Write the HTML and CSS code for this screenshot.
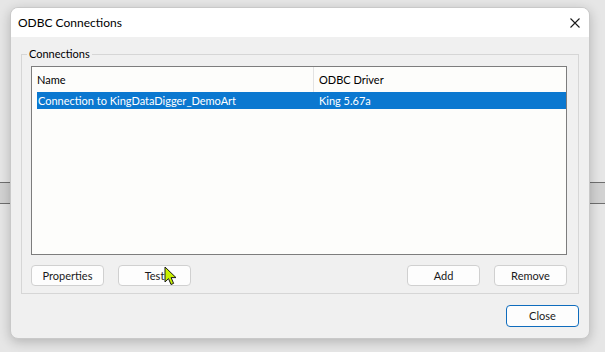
FILE: index.html
```html
<!DOCTYPE html>
<html>
<head>
<meta charset="utf-8">
<link rel="stylesheet" href="styles.css">
</head>
<body>
<div class="window">
  <div class="titlebar">
    <span class="title">ODBC Connections</span>
    <svg class="close-x" width="10" height="10" viewBox="0 0 10 10"><path d="M0.5 0.5 L9.5 9.5 M9.5 0.5 L0.5 9.5" stroke="#1b1b1b" stroke-width="1.1" fill="none"/></svg>
  </div>
  <div class="content">
    <div class="group">
      <span class="group-label">Connections</span>
      <div class="list">
        <div class="list-header">
          <div class="col col-name">Name</div>
          <div class="col col-driver">ODBC Driver</div>
        </div>
        <div class="row selected">
          <div class="cell cell-name">Connection to KingDataDigger_DemoArt</div>
          <div class="cell cell-driver">King 5.67a</div>
        </div>
      </div>
      <div class="buttons">
        <button class="btn">Properties</button>
        <button class="btn">Test</button>
        <span class="spacer"></span>
        <button class="btn">Add</button>
        <button class="btn">Remove</button>
      </div>
    </div>
    <div class="footer">
      <button class="btn btn-default">Close</button>
    </div>
  </div>
</div>
<svg class="cursor" width="14" height="20" viewBox="0 0 14 20"><path d="M1 1 L1 16 L4.5 12.6 L7 18.5 L9.6 17.4 L7.1 11.6 L12 11.6 Z" fill="#c8f000" stroke="#1a1a1a" stroke-width="1" stroke-linejoin="round"/></svg>
</body>
</html>
```
FILE: styles.css
```css
html, body {
  margin: 0;
  padding: 0;
}
body {
  width: 605px;
  height: 352px;
  overflow: hidden;
  position: relative;
  font-family: "Lato", "Noto Sans", sans-serif;
  font-size: 11px;
  color: #1a1a1a;
  background:
    linear-gradient(to bottom, transparent 182px, #6f6f6f 182px, #6f6f6f 183px, #d2d2d2 183px, #d2d2d2 203px, #6f6f6f 203px, #6f6f6f 204px, transparent 204px),
    #e6e6e6;
  padding-top: 7px;
  padding-left: 10px;
  box-sizing: border-box;
}
.window {
  width: 580px;
  height: 332px;
  box-sizing: border-box;
  border: 1px solid #c9c9c9;
  border-radius: 8px;
  background: #f0f0f0;
  box-shadow: 0 3px 12px rgba(0, 0, 0, 0.22);
  overflow: hidden;
  display: flex;
  flex-direction: column;
}
.titlebar {
  height: 29px;
  background: #ffffff;
  display: flex;
  align-items: center;
  justify-content: space-between;
  padding: 0 9px 0 7px;
  flex: none;
}
.title {
  font-size: 12px;
  color: #000;
}
.close-x {
  display: block;
  margin-top: 1px;
}
.content {
  flex: 1;
  display: flex;
  flex-direction: column;
  padding: 17px 10px 0 10px;
}
.group {
  position: relative;
  border: 1px solid #d6d6d6;
  height: 240px;
  box-sizing: border-box;
  padding: 11px 11px 0 9px;
  display: flex;
  flex-direction: column;
}
.group-label {
  position: absolute;
  left: 5px;
  top: -9px;
  padding: 0 2px;
  background: #f0f0f0;
  line-height: 16px;
  color: #000;
}
.list {
  height: 189px;
  box-sizing: border-box;
  border: 1px solid #7d7d7d;
  background: #fdfdfb;
  display: flex;
  flex-direction: column;
}
.list-header {
  display: flex;
  height: 25px;
  align-items: stretch;
}
.col {
  display: flex;
  align-items: center;
  color: #000;
}
.col-name {
  width: 276px;
  padding-left: 5px;
  border-right: 1px solid #e3e3e3;
}
.col-driver {
  flex: 1;
  padding-left: 5px;
}
.row {
  display: flex;
  height: 17px;
  align-items: center;
  margin-left: 5px;
}
.row.selected {
  background: #0b78d0;
  color: #fff;
}
.cell-name {
  width: 276px;
  padding-left: 1px;
}
.cell-driver {
  flex: 1;
  padding-left: 5px;
}
.buttons {
  display: flex;
  gap: 14px;
  margin-top: 10px;
}
.spacer {
  flex: 1;
}
.btn {
  width: 73px;
  height: 21px;
  box-sizing: border-box;
  border: 1px solid #d0d0d0;
  border-radius: 4px;
  background: #fdfdfd;
  font-family: inherit;
  font-size: 11px;
  color: #1a1a1a;
  padding: 0;
  line-height: 18px;
}
.footer {
  display: flex;
  justify-content: flex-end;
  margin-top: 11px;
}
.btn-default {
  height: 22px;
  border-color: #0f6cbd;
}
.cursor {
  position: absolute;
  left: 164px;
  top: 266px;
}
```
